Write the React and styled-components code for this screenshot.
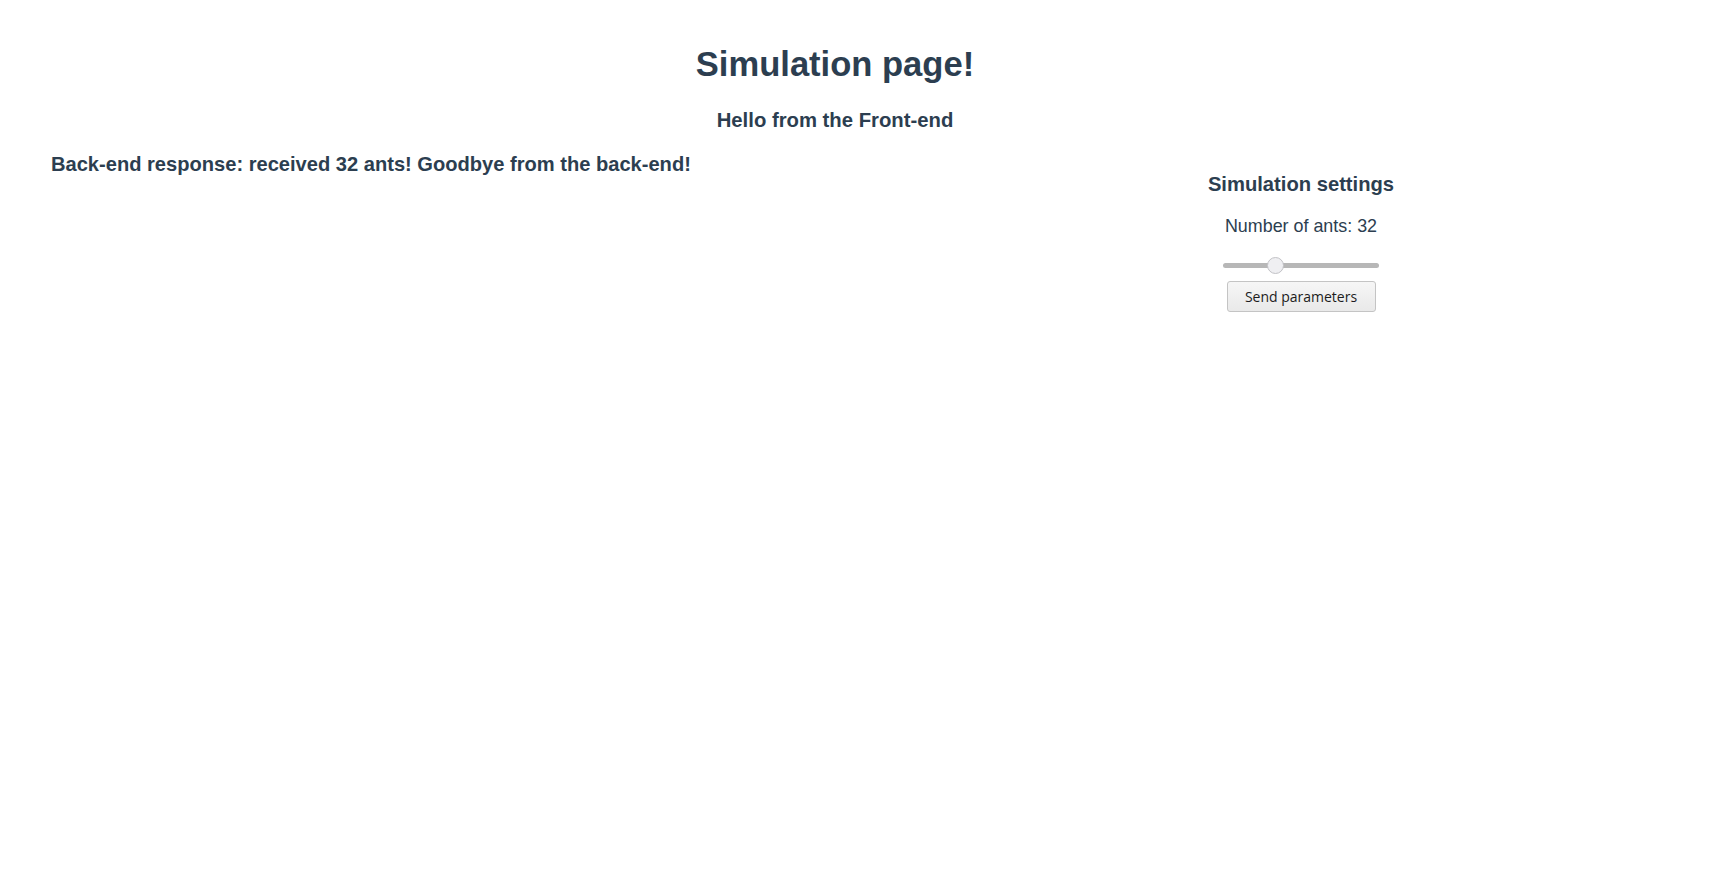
import React, { useState } from 'react'
import styled, { createGlobalStyle } from 'styled-components'

const GlobalStyle = createGlobalStyle`
    html, body {
        margin: 0;
        padding: 0;
        background: #ffffff;
    }
    body {
        font-family: "Liberation Sans", Arial, Helvetica, sans-serif;
        font-size: 17.28px;
        color: #2c3e50;
        -webkit-font-smoothing: antialiased;
    }
`;

const Page = styled.div`
    width: 100%;
    min-height: 880px;
`;

const Header = styled.header`
    padding: 44.5px 51px 0 0;
    text-align: center;
`;

const Title = styled.h1`
    margin: 0;
    font-size: 34.56px;
    font-weight: 700;
    line-height: normal;
`;

const Subtitle = styled.h3`
    margin: 25px 0 0;
    font-size: 20.3px;
    font-weight: 700;
    line-height: normal;
`;

const Content = styled.main`
    display: grid;
    grid-template-columns: 1fr 300px;
    align-items: start;
    margin-top: 21px;
    padding: 0 270px 0 51px;
`;

const Response = styled.h3`
    margin: 0;
    font-size: 20.1px;
    font-weight: 700;
    line-height: normal;
`;

const Settings = styled.section`
    display: flex;
    flex-direction: column;
    align-items: center;
    padding-top: 20.7px;
    text-align: center;
`;

const SettingsTitle = styled.h3`
    margin: 0;
    font-size: 20.2px;
    font-weight: 700;
    line-height: normal;
`;

const Label = styled.p`
    margin: 20px 0 0;
    font-size: 17.9px;
    line-height: normal;
`;

const Range = styled.input`
    -webkit-appearance: none;
    appearance: none;
    width: 156px;
    height: 18px;
    margin: 19px 0 0;
    padding: 0;
    background: transparent;
    cursor: pointer;

    &::-webkit-slider-runnable-track {
        height: 5px;
        border-radius: 3px;
        background: #b7b7b7;
    }
    &::-webkit-slider-thumb {
        -webkit-appearance: none;
        appearance: none;
        width: 17px;
        height: 17px;
        margin-top: -6px;
        border-radius: 50%;
        background: #efeff2;
        border: 1px solid #c2c2c6;
        box-sizing: border-box;
    }
    &:focus {
        outline: none;
    }
`;

const SendButton = styled.button`
    margin-top: 7px;
    width: 149px;
    height: 31px;
    padding: 0 8px;
    font-family: "Open Sans", "Noto Sans", sans-serif;
    font-size: 14px;
    color: #1c1c1c;
    background: linear-gradient(#f6f6f6, #e9e9e9);
    border: 1px solid #c4c4c4;
    border-radius: 3px;
    cursor: pointer;
    &:hover {
        background: linear-gradient(#fafafa, #ededed);
    }
`;

const App = () => {
    const [ants, setAnts] = useState(32);
    const [received] = useState(32);

    return (
        <Page>
            <GlobalStyle />
            <Header>
                <Title>Simulation page!</Title>
                <Subtitle>Hello from the Front-end</Subtitle>
            </Header>
            <Content>
                <Response>Back-end response: received {received} ants! Goodbye from the back-end!</Response>
                <Settings>
                    <SettingsTitle>Simulation settings</SettingsTitle>
                    <Label>Number of ants: {ants}</Label>
                    <Range
                        type="range"
                        min="1"
                        max="100"
                        value={ants}
                        onChange={(e) => setAnts(Number(e.target.value))}
                    />
                    <SendButton type="button">Send parameters</SendButton>
                </Settings>
            </Content>
        </Page>
    )
}

export default App
